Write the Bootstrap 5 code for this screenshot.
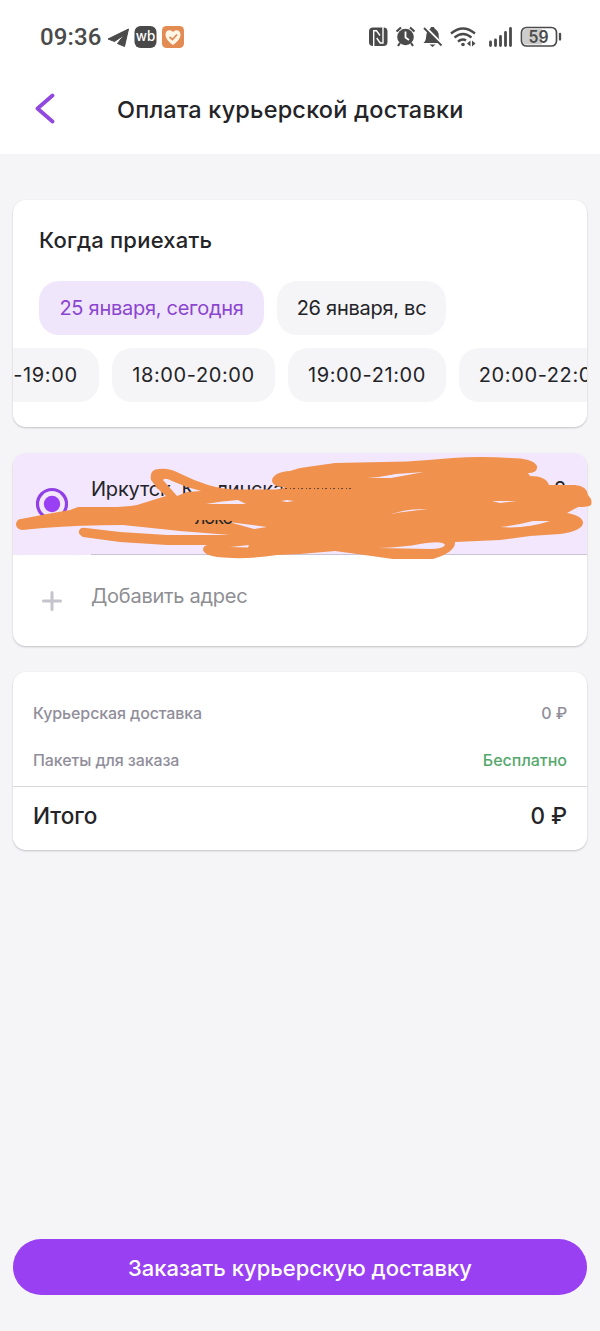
<!DOCTYPE html>
<html lang="ru">
<head>
<meta charset="utf-8">
<meta name="viewport" content="width=device-width, initial-scale=1">
<title>Оплата курьерской доставки</title>
<link rel="stylesheet" href="https://cdn.jsdelivr.net/npm/bootstrap@5.3.0/dist/css/bootstrap.min.css">
<style>
  body { font-family: Inter, "Noto Sans", sans-serif; background: #f5f5f7; color: #242428; min-height: 1331px; }
  .statusbar { height: 74px; padding: 0 38px 0 40px; color: #4a4a4a; }
  .clock { font: 500 24px/1 Roboto, sans-serif; letter-spacing: .1px; width: 67px; }
  .topbar { height: 80px; padding: 0 0 10px; }
  .topbar-back { width: 117px; padding-left: 34px; }
  .topbar h1 { font-size: 23.5px; font-weight: 500; letter-spacing: .2px; padding-top: 3px; }
  .content { padding: 46px 13px 0; gap: 26px; }
  .panel { border-radius: 13px; background: #fff; box-shadow: 0 1px 2px rgba(40,40,60,.25); overflow: hidden; }
  .when { height: 227px; padding-top: 25px; }
  .when h2 { font-size: 22px; line-height: 30px; font-weight: 500; letter-spacing: .22px; margin: 0 0 26px 26px; }
  .chip { flex: none; height: 54px; border-radius: 20px; background: #f5f5f7; font-size: 20px; }
  .chip-on { background: #f0e6fc; color: #8b45cf; }
  .days { gap: 13px; margin: 0 0 13px 26px; letter-spacing: -.27px; }
  .slots { gap: 13px; margin-left: -74px; letter-spacing: .62px; }
  .addresses { height: 193px; }
  .address-on { height: 102px; background: #f2e7fd; }
  .address-icon { width: 78px; flex: none; }
  .address-text { font-size: 20px; line-height: 28px; letter-spacing: -.2px; border-bottom: 1px solid #c9c3d3; padding: 22px 21px 0 0; white-space: nowrap; }
  .address-new { height: 91px; color: #8e8e93; font-size: 20px; letter-spacing: -.27px; }
  .add-label { padding-top: 2px; }
  .scribble { position: absolute; left: -13px; top: 0; }
  .peek { position: absolute; left: 182px; top: 67px; height: 6px; width: 40px; overflow: hidden; font-size: 18px; letter-spacing: -1px; }
  .peek span { display: block; margin-top: -14px; line-height: 24px; }
  .bill { height: 178px; font-weight: 500; }
  .bill-rows { height: 115px; padding: 17px 20px 0; color: #918e9b; font-size: 16px; letter-spacing: -.12px; border-bottom: 1px solid #d9d9dc; }
  .bill-rows > div { height: 47.5px; }
  .free { color: #55a86c; letter-spacing: 0; }
  .bill-total { height: 58px; padding: 0 20px; font-size: 22.5px; }
  .order { height: 56px; border-radius: 28px; background: #9940f2; color: #fff; font-size: 22px; font-weight: 500; margin: 389px 13px 0; width: 574px; border: 0; padding: 2px 0 0; }
  .order:hover { background: #8a33e0; color: #fff; }
</style>
</head>
<body>
<header class="bg-white">
  <div class="statusbar d-flex align-items-center justify-content-between">
    <div class="d-flex align-items-center">
      <span class="clock">09:36</span>
      <svg width="80" height="24" viewBox="107 25 80 24" aria-hidden="true">
        <path d="M108 39 128.500 29 124.500 46.500 117.500 43.500 124 35 114.500 41.500Z" fill="#4a4a4a" stroke="#4a4a4a" stroke-width="1" stroke-linejoin="round"/>
        <rect x="134.500" y="26" width="22" height="22" rx="6" fill="#494949"/>
        <text x="145.500" y="41" text-anchor="middle" font-family="Inter" font-size="14" font-weight="500" textLength="19.500" lengthAdjust="spacingAndGlyphs" fill="#fff">wb</text>
        <rect x="162" y="26" width="22" height="22" rx="4.500" fill="#e28b52"/>
        <path d="M173 45 C166 40 165.500 36 165.500 34.500 C165.500 30 170.500 29 173 32 C175.500 29 180.500 30 180.500 34.500 C180.500 36 180 40 173 45Z" fill="#fff6e6"/>
        <path d="M169.500 37 172.500 39.500 177 34.500" fill="none" stroke="#df8b55" stroke-width="1.700"/>
      </svg>
    </div>
    <svg width="194" height="26" viewBox="368 24 194 26" aria-hidden="true" fill="none" stroke="#4a4a4a">
      <!-- NFC -->
      <rect x="369" y="27.500" width="18.500" height="18.500" rx="4" fill="#4a4a4a" stroke="none"/>
      <path d="M373.700 46.500V30.800H376.500L380 35.500M376.700 38 380.200 43H383V27" stroke="#fff" stroke-width="1.400"/>
      <!-- alarm -->
      <circle cx="405.500" cy="37" r="8.300" fill="#4a4a4a" stroke="none"/>
      <path d="M396.500 31.500 401 27.500M410 27.500 414.500 31.500M400 43 398 46M411 43 413 46" stroke-width="2.200"/>
      <path d="M405.500 31.500V37.500L409 40" stroke="#fff" stroke-width="1.800"/>
      <!-- muted bell -->
      <path d="M423.500 43C427 40 425.500 36 427 32.500C428 30 431 28.500 431 27H434C434 29 437.500 29.500 438.500 33.500C439 37 438.500 40 441.500 43ZM429.500 44.500H435.500L432.500 47Z" fill="#4a4a4a" stroke="none"/>
      <path d="M425 27 443 45" stroke="#fff" stroke-width="2.500"/>
      <path d="M424 28 441.500 45.500" stroke-width="1.800"/>
      <!-- wifi -->
      <path d="M451 33.500Q463 23.500 475 33.500M454.500 37.500Q463 30.500 471.500 37.500M458 41.500Q462.500 38 466 40.500" stroke-width="2.300"/>
      <circle cx="463" cy="44.500" r="1.800" fill="#4a4a4a" stroke="none"/>
      <path d="M467 43.500 470.500 40.500V46.500ZM475.500 43.500 472 40.500V46.500Z" fill="#4a4a4a" stroke="none"/>
      <!-- signal -->
      <path d="M490.500 42V45.500M495.500 40V45.500M500.500 36.500V45.500M505.500 32.500V45.500M510.500 28.500V45.500" stroke-width="2.800" stroke-linecap="round"/>
      <!-- battery -->
      <rect x="521.500" y="27.500" width="35" height="18.500" rx="5" fill="#fff" stroke-width="1.700"/>
      <path d="M526 29H542V44.500H526Q523 44.500 523 41V32.500Q523 29 526 29Z" fill="#ccc" stroke="none"/>
      <path d="M560 34V39.500" stroke-width="2.300" stroke-linecap="round"/>
      <text x="538.500" y="43" text-anchor="middle" font-family="Inter" font-size="17" font-weight="600" textLength="20" lengthAdjust="spacingAndGlyphs" fill="#4a4a4a" stroke="none">59</text>
    </svg>
  </div>
  <div class="topbar d-flex align-items-center">
    <div class="topbar-back">
      <svg width="22" height="32" viewBox="0 0 22 32" role="img" aria-label="Назад"><path d="M18.500 2.500 3.500 15.500 18.500 28.500" fill="none" stroke="#9148df" stroke-width="3.800" stroke-linecap="round" stroke-linejoin="round"/></svg>
    </div>
    <h1 class="m-0 text-nowrap">Оплата курьерской доставки</h1>
  </div>
</header>

<main class="content d-flex flex-column">
  <section class="panel when">
    <h2>Когда приехать</h2>
    <div class="days d-flex">
      <div class="chip chip-on d-flex align-items-center justify-content-center" style="width:225px">25 января, сегодня</div>
      <div class="chip d-flex align-items-center justify-content-center" style="width:169px">26 января, вс</div>
    </div>
    <div class="slots d-flex">
      <div class="chip d-flex align-items-center justify-content-center" style="width:160px">17:00-19:00</div>
      <div class="chip d-flex align-items-center justify-content-center" style="width:163px">18:00-20:00</div>
      <div class="chip d-flex align-items-center justify-content-center" style="width:158px">19:00-21:00</div>
      <div class="chip d-flex align-items-center justify-content-center" style="width:166px">20:00-22:00</div>
    </div>
  </section>

  <section class="position-relative">
    <div class="panel addresses">
      <div class="address-on d-flex">
        <div class="address-icon d-flex align-items-center justify-content-center">
          <svg width="34" height="34" viewBox="0 0 34 34"><circle cx="17" cy="17" r="14.500" fill="none" stroke="#9140e6" stroke-width="3.200"/><circle cx="17" cy="17" r="8.200" fill="#9a40f4"/></svg>
        </div>
        <div class="address-text flex-fill d-flex justify-content-between"><span>Иркутск, К&nbsp;&nbsp;&nbsp;&nbsp;линская</span><span>2</span></div>
      </div>
      <div class="address-new d-flex">
        <div class="address-icon d-flex align-items-center justify-content-center">
          <svg width="20" height="20" viewBox="0 0 20 20"><path d="M10 1.500V18.500M1.500 10H18.500" stroke="#c5c4cc" stroke-width="3" stroke-linecap="round"/></svg>
        </div>
        <div class="pt-4"><div class="add-label">Добавить адрес</div></div>
      </div>
    </div>
    <svg class="scribble" width="600" height="110" viewBox="0 453 600 110" aria-hidden="true">
      <path fill="#f0914d" fill-rule="evenodd" d="M21 519 Q46 514 70 510 L78 507 H110 Q125 507 137 505 L153 500 166 496 158 489 151 480 Q149 469 159 469 Q170 468 181 474 Q195 481 208 485 Q222 489 235 489.500 H280 L285 487 Q272 487 272 480 Q274 472 290 471 L300 468 335 463 407 461.500 Q427 460 453 458 Q480 456 510 458 Q533 458 537 466 Q538 473 528 473 L530 476 Q546 476 549 485 L575 485 Q587 486 588 495 Q593 500 591 505 Q589 507 578 507 L567 513 Q583 516 583 523 Q582 531 560 534 L530 536 500 540 455 542 Q456 552 433 559 H393 Q365 555 335 551 L300 554 277 555 Q245 560 217 557 Q204 555 203 550 Q203 546 207 545 H167 L120 542 83 537 Q78 534 79 531 Q80 527 86 528 L120 532 167 535 H230 L180 531 123 525 Q80 525 43 528 L22 530 Q16 529 16 524 Q17 519 21 519Z
        M163 480 Q165 477 172 481 L187 487 201 491 187 492 177 496Z
        M206 504 Q222 501 238 500 L246 504Z
        M281 501 287 500 294 501 287 502Z
        M229 522 267 527 254 529Z
        M230 547 249 545 248 547.500Z
        M367 478 Q382 477 396 474 L424 472 391 478Z
        M392 514 Q408 508 428 509.500 Q405 511 392 514Z
        M492 501 517 501 500 503Z
        M500 527 Q518 525 533 521 H550 Q526 529 500 527Z
        M378 548 Q405 547 420 544 Q443 540 445 545 Q443 549 430 549Z"/>
      <path d="M285 488.500H352" stroke="#49312f" stroke-width="1.200" stroke-dasharray="2 3 1 2" opacity=".8"/>
    </svg>
    <div class="peek"><span>локс</span></div>
  </section>

  <section class="panel bill">
    <div class="bill-rows">
      <div class="d-flex align-items-center justify-content-between"><span>Курьерская доставка</span><span>0 ₽</span></div>
      <div class="d-flex align-items-center justify-content-between"><span>Пакеты для заказа</span><span class="free">Бесплатно</span></div>
    </div>
    <div class="bill-total d-flex align-items-center justify-content-between"><span>Итого</span><span>0 ₽</span></div>
  </section>
</main>

<button type="button" class="btn order">Заказать курьерскую доставку</button>
<script src="https://cdn.jsdelivr.net/npm/bootstrap@5.3.0/dist/js/bootstrap.bundle.min.js"></script>
</body>
</html>
